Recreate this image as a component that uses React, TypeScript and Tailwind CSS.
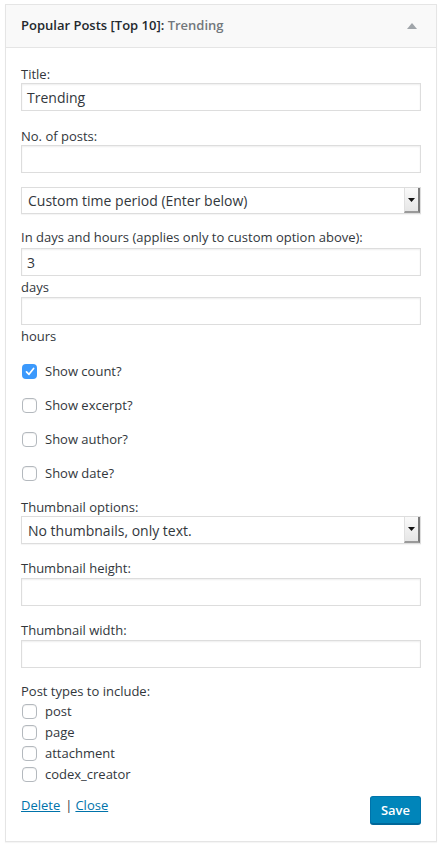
import React from "react";

const font = { fontFamily: '"Open Sans", "Noto Sans", sans-serif' };

function Label({ children, className = "" }: { children: React.ReactNode; className?: string }) {
  return <div className={`text-[13px] leading-[18px] text-[#32373c] ${className}`}>{children}</div>;
}

function TextInput({ value = "", className = "" }: { value?: string; className?: string }) {
  return (
    <div
      className={`h-[28px] w-full border border-[#dddddd] bg-white shadow-[inset_0_1px_2px_rgba(0,0,0,0.07)] pl-[5px] flex items-center text-[14px] text-[#32373c] ${className}`}
    >
      {value}
    </div>
  );
}

function Select({ value, className = "", h = "h-[27px]" }: { value: string; className?: string; h?: string }) {
  return (
    <div
      className={`${h} w-full border border-[#dddddd] bg-white flex items-center justify-between pl-[6px] text-[14px] text-[#32373c] shadow-[0_1px_1px_rgba(0,0,0,0.04)] ${className}`}
    >
      <span>{value}</span>
      <span className="h-full w-[16px] flex items-center justify-center bg-gradient-to-b from-[#fafafa] to-[#e6e6e6] border-r-2 border-b-2 border-r-[#7a7a7a] border-b-[#9a9a9a] border-l border-l-[#e0e0e0]">
        <svg width="7" height="4" viewBox="0 0 7 4">
          <path d="M0 0 H7 L3.5 4 Z" fill="#111" />
        </svg>
      </span>
    </div>
  );
}

function Checkbox({ checked = false }: { checked?: boolean }) {
  if (checked) {
    return (
      <span className="w-[15px] h-[15px] rounded-[4px] bg-[#3b99fc] flex items-center justify-center shrink-0">
        <svg width="10" height="9" viewBox="0 0 10 9">
          <path d="M1.5 4.8 L4 7.3 L8.6 1.5" stroke="#fff" strokeWidth="1.7" fill="none" strokeLinecap="round" strokeLinejoin="round" />
        </svg>
      </span>
    );
  }
  return (
    <span className="w-[15px] h-[15px] rounded-[4px] bg-white border border-[#b4b9be] shadow-[inset_0_1px_1px_rgba(0,0,0,0.06)] shrink-0" />
  );
}

function CheckRow({ label, checked = false, className = "" }: { label: string; checked?: boolean; className?: string }) {
  return (
    <div className={`flex items-center gap-[8px] pl-[1px] text-[13px] leading-[18px] text-[#32373c] ${className}`}>
      <Checkbox checked={checked} />
      <span>{label}</span>
    </div>
  );
}

function TypeRow({ label }: { label: string }) {
  return (
    <div className="h-[21px] flex items-center gap-[8px] pl-[1px] text-[13px] text-[#32373c]">
      <Checkbox />
      <span>{label}</span>
    </div>
  );
}

export default function App() {
  return (
    <div className="min-h-[846px] bg-white pt-[4px] pl-[5px]" style={font}>
      <div className="w-[432px] border border-[#e5e5e5] bg-white shadow-[0_1px_1px_rgba(0,0,0,0.04)]">
        <div className="h-[43px] bg-[#f9f9f9] border-b border-[#e5e5e5] flex items-center justify-between pl-[15px] pr-[18px]">
          <div className="text-[13px] font-semibold text-[#23282d]">
            Popular Posts [Top 10]: <span className="text-[#72777c]">Trending</span>
          </div>
          <svg width="10" height="6" viewBox="0 0 10 6" className="mr-[1px]">
            <path d="M0 6 L5 0 L10 6 Z" fill="#a0a5aa" />
          </svg>
        </div>
        <div className="px-[15px] pb-[17px]">
          <Label className="mt-[17px]">Title:</Label>
          <TextInput value="Trending" />
          <Label className="mt-[16px]">No. of posts:</Label>
          <TextInput />
          <Select value="Custom time period (Enter below)" className="mt-[14px]" />
          <Label className="mt-[14px]">In days and hours (applies only to custom option above):</Label>
          <TextInput value="3" className="mt-[2px]" />
          <Label className="mt-[2px]">days</Label>
          <TextInput className="mt-[1px]" />
          <Label className="mt-[2px]">hours</Label>
          <CheckRow label="Show count?" checked className="mt-[17px]" />
          <CheckRow label="Show excerpt?" className="mt-[16px]" />
          <CheckRow label="Show author?" className="mt-[16px]" />
          <CheckRow label="Show date?" className="mt-[16px]" />
          <Label className="mt-[16px]">Thumbnail options:</Label>
          <Select value="No thumbnails, only text." h="h-[28px]" />
          <Label className="mt-[15px]">Thumbnail height:</Label>
          <TextInput className="mt-[1px]" />
          <Label className="mt-[15px]">Thumbnail width:</Label>
          <TextInput className="mt-[1px]" />
          <Label className="mt-[14px]">Post types to include:</Label>
          <div className="mt-[1px]">
            <TypeRow label="post" />
            <TypeRow label="page" />
            <TypeRow label="attachment" />
            <TypeRow label="codex_creator" />
          </div>
          <div className="mt-[11px] flex items-start justify-between">
            <div className="text-[13px] leading-[18px] text-[#0073aa]">
              <a className="underline">Delete</a>
              <span className="text-[#32373c] ml-[5px] mr-[3px]">|</span>
              <a className="underline">Close</a>
            </div>
            <button className="h-[28px] px-[10px] rounded-[3px] bg-[#0085ba] border border-[#0073aa] border-b-[#006799] shadow-[0_1px_0_#006799] text-white text-[13px] font-semibold leading-none">
              Save
            </button>
          </div>
        </div>
      </div>
    </div>
  );
}
